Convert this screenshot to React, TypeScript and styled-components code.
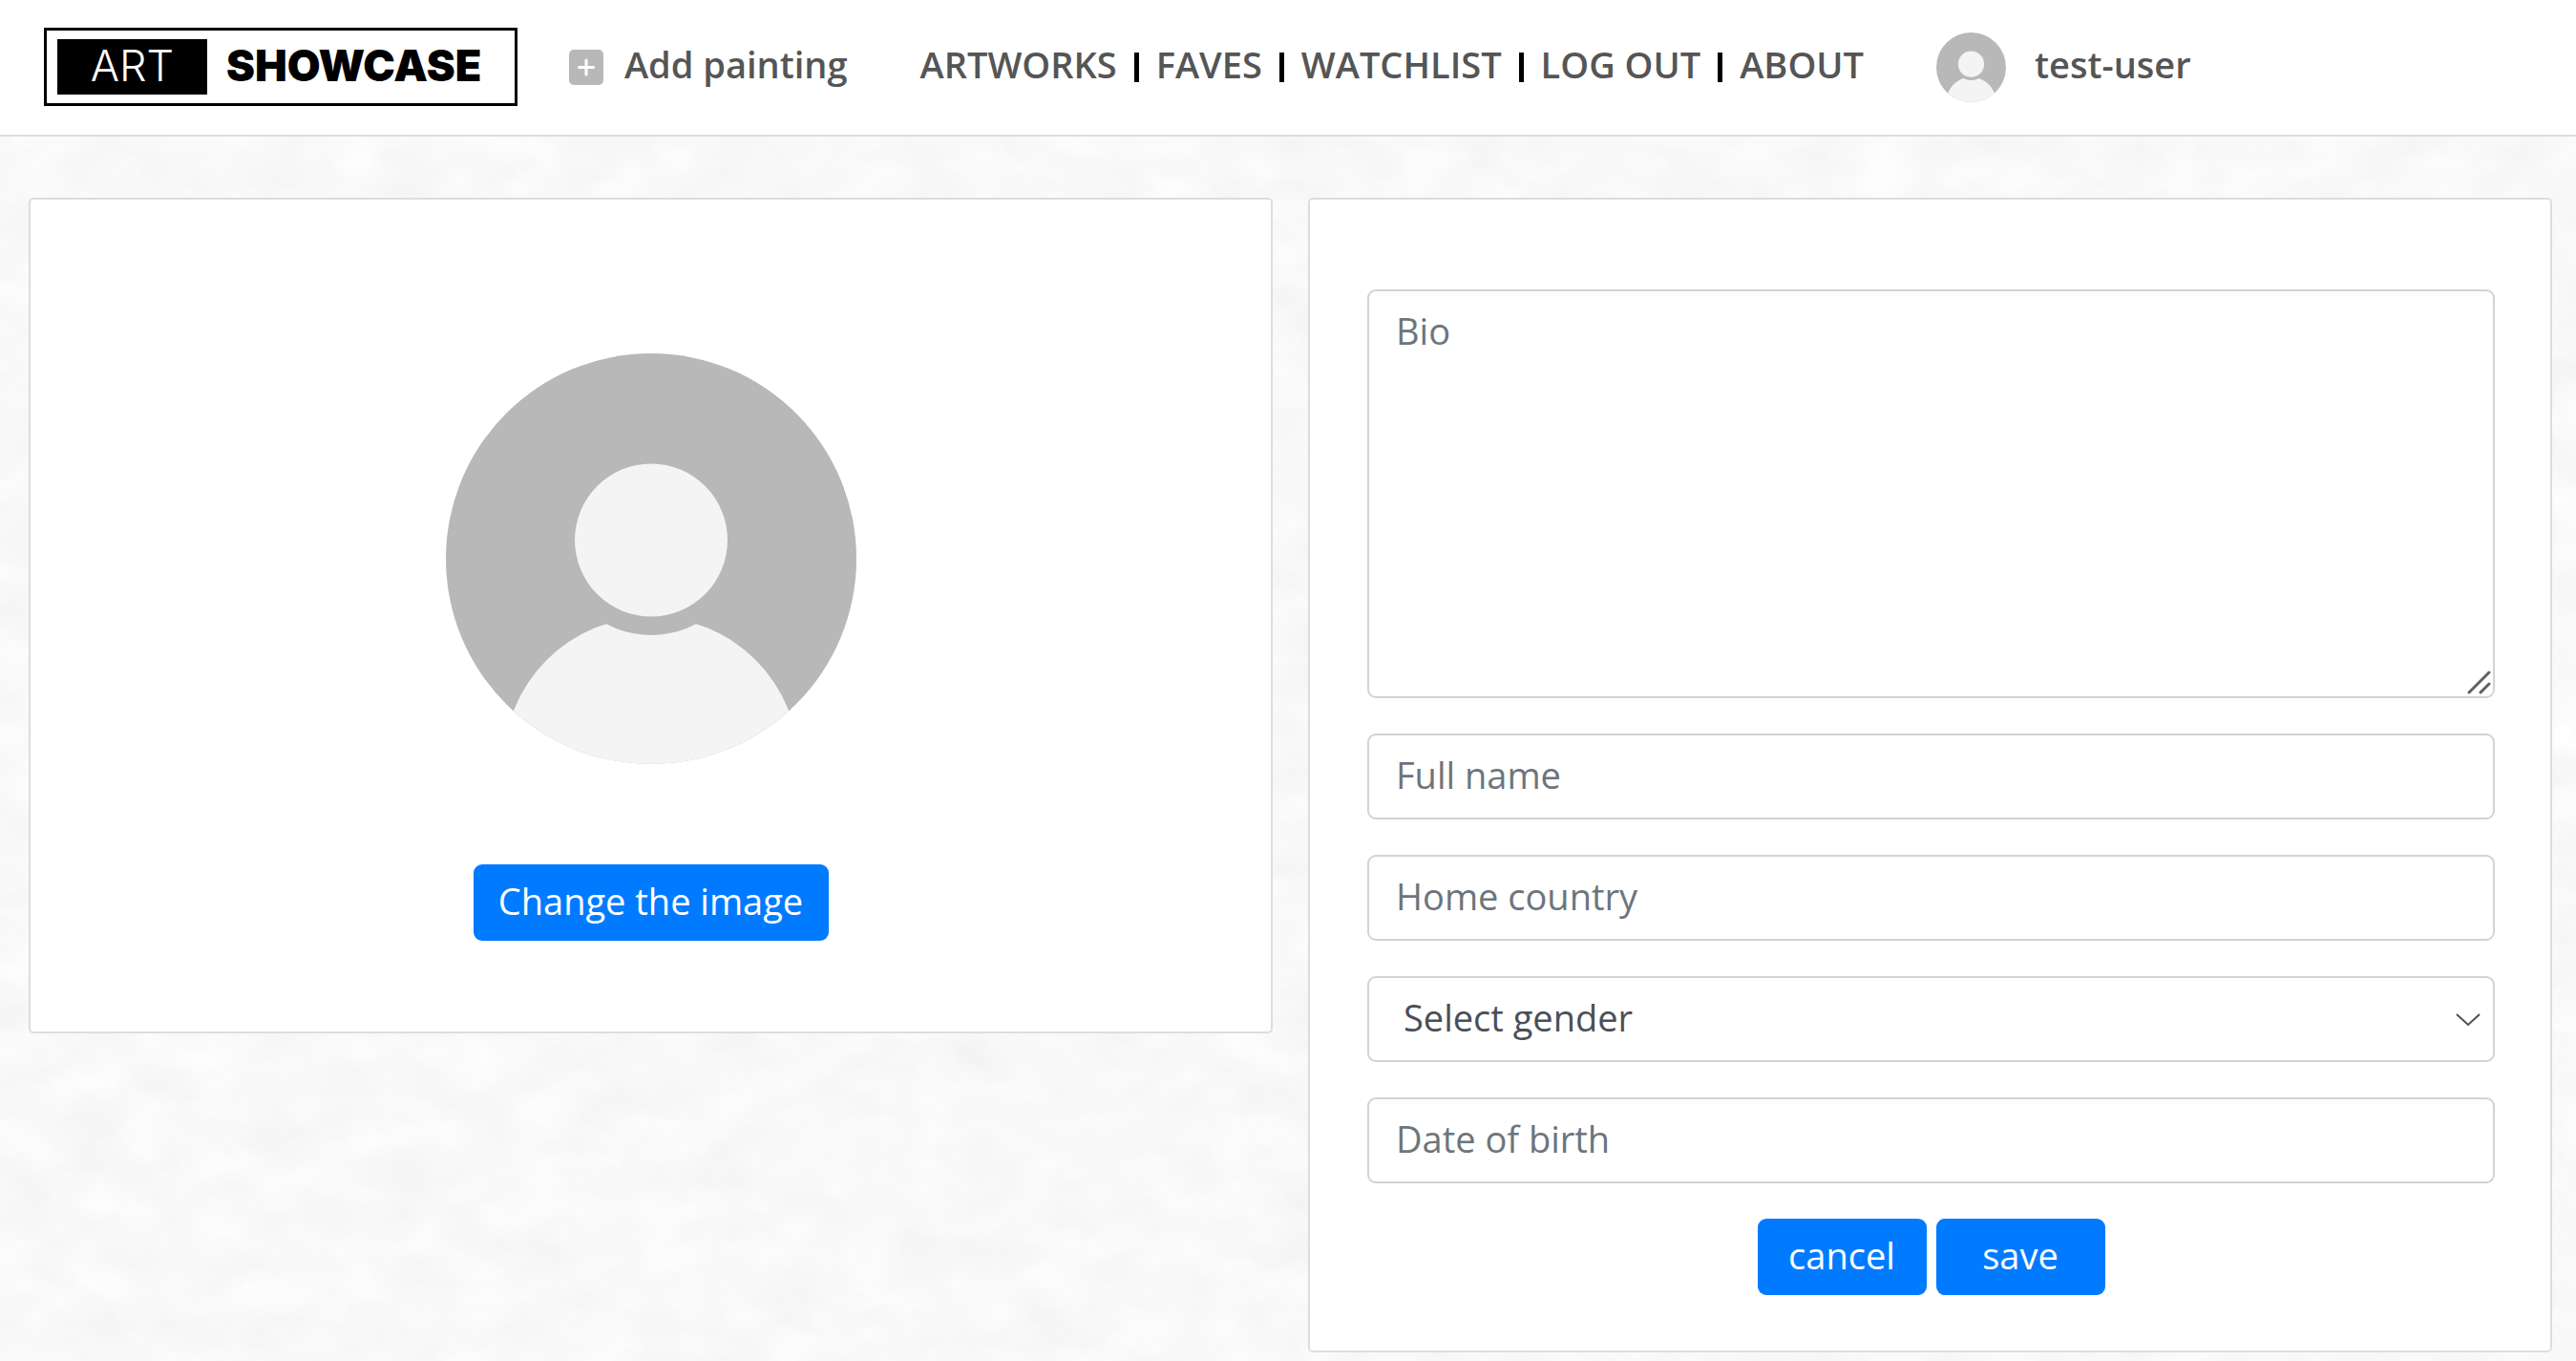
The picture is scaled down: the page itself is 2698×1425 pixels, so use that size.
import React, { useId } from "react";
import styled, { createGlobalStyle } from "styled-components";

const colors = {
  ink: "#555555",
  line: "#dbdde1",
  fieldLine: "#ced4da",
  placeholder: "#6c757d",
  fieldText: "#495057",
  primary: "#007bff",
  muted: "#b8b8b8",
  pale: "#f4f4f4",
};

const GlobalStyle = createGlobalStyle`
  *, *::before, *::after { box-sizing: border-box; }
  html { background: #f9f9f9; }
  body {
    margin: 0;
    font-family: "Open Sans", "Noto Sans", sans-serif;
    font-size: 38px;
    font-weight: 500;
    line-height: 56px;
    color: ${colors.ink};
  }
  button, input, select, textarea { font: inherit; }
`;

const Page = styled.div`
  position: relative;
  min-height: 100vh;
`;

const PaperTexture = styled.svg`
  position: absolute;
  inset: 0;
  width: 100%;
  height: 100%;
  z-index: -1;
`;

const Header = styled.header`
  display: flex;
  align-items: center;
  padding: 29px 46px 30px;
  background: #fff;
  border-bottom: 2px solid ${colors.line};
  font-weight: 600;
`;

const Logo = styled.a`
  display: flex;
  align-items: center;
  flex: none;
  width: 496px;
  height: 82px;
  padding: 0 11px;
  gap: 20px;
  border: 3px solid #000;
  color: #000;
  font-family: Inter, "Open Sans", sans-serif;
  font-size: 45px;
  text-decoration: none;
`;

const LogoArt = styled.span`
  display: flex;
  align-items: center;
  justify-content: center;
  width: 157px;
  height: 58px;
  padding-bottom: 2px;
  background: #000;
  color: #fff;
  font-weight: 300;
`;

const LogoShowcase = styled.span`
  padding-bottom: 2px;
  font-weight: 900;
`;

const HeaderLink = styled.a`
  display: inline-flex;
  align-items: center;
  color: ${colors.ink};
  text-decoration: none;
  white-space: nowrap;
`;

const AddLink = styled(HeaderLink)`
  gap: 22px;
  margin-left: 54px;
`;

const UserLink = styled(HeaderLink)`
  gap: 30px;
  margin-left: 76px;
`;

const LinkText = styled.span`
  padding-bottom: 6px;
`;

const Nav = styled.nav`
  margin-left: 76px;
`;

const NavList = styled.ul`
  display: flex;
  align-items: center;
  gap: 18px;
  margin: 0;
  padding: 0;
  list-style: none;
`;

const NavItem = styled.li`
  display: flex;
  align-items: center;
  gap: 18px;

  & + &::before {
    content: "";
    width: 5px;
    height: 31px;
    background: #000;
  }
`;

const AvatarSvg = styled.svg<{ $size: number }>`
  display: block;
  flex: none;
  width: ${(p) => p.$size}px;
  height: ${(p) => p.$size}px;
`;

const Main = styled.main`
  display: grid;
  grid-template-columns: 1fr 1fr;
  align-items: start;
  gap: 37px;
  padding: 64px 25px 9px 30px;
`;

const Card = styled.section`
  background: #fff;
  border: 2px solid ${colors.line};
  border-radius: 5px;
`;

const PhotoCard = styled(Card)`
  display: flex;
  flex-direction: column;
  align-items: center;
  gap: 105px;
  padding: 161px 58px 95px;
`;

const FormCard = styled(Card)`
  padding: 94px 58px 58px 60px;
`;

const Form = styled.form`
  display: flex;
  flex-direction: column;
  gap: 37px;
`;

const Button = styled.button<{ $width: number }>`
  width: ${(p) => p.$width}px;
  height: 80px;
  padding: 0 0 4px;
  border: 0;
  border-radius: 9px;
  background: ${colors.primary};
  color: #fff;
  cursor: pointer;
`;

const Field = styled.div`
  position: relative;
  display: flex;
`;

const controlStyle = `
  display: block;
  width: 100%;
  margin: 0;
  border: 2px solid ${colors.fieldLine};
  border-radius: 9px;
  background: #fff;
  color: ${colors.fieldText};
  outline: none;
  &::placeholder { color: ${colors.placeholder}; opacity: 1; }
  &:focus { border-color: #80bdff; }
`;

const TextInput = styled.input`
  ${controlStyle}
  height: 90px;
  padding: 0 28px 4px;
`;

const TextArea = styled.textarea`
  ${controlStyle}
  height: 428px;
  padding: 13px 28px;
  resize: none;
`;

const Select = styled.select`
  ${controlStyle}
  height: 90px;
  padding: 0 80px 4px 36px;
  appearance: none;
`;

const Chevron = styled.svg`
  position: absolute;
  right: 15px;
  top: 38px;
  width: 26px;
  height: 15px;
  pointer-events: none;
`;

const ResizeGrip = styled.svg`
  position: absolute;
  right: 3px;
  bottom: 3px;
  width: 26px;
  height: 26px;
  pointer-events: none;
`;

const Actions = styled.div`
  display: flex;
  justify-content: center;
  gap: 10px;
`;

function Avatar({ size }: { size: number }) {
  const id = useId();
  return (
    <AvatarSvg $size={size} viewBox="0 0 430 430" role="img" aria-label="User avatar">
      <clipPath id={id}>
        <circle cx="215" cy="215" r="215" />
      </clipPath>
      <g clipPath={`url(#${id})`}>
        <rect width="430" height="430" fill={colors.muted} />
        <circle cx="215" cy="430.5" r="154.7" fill={colors.pale} />
        <circle cx="215" cy="195.5" r="99.5" fill={colors.muted} />
        <circle cx="215" cy="195.5" r="80" fill={colors.pale} />
      </g>
    </AvatarSvg>
  );
}

function PlusIcon() {
  return (
    <svg width="36" height="37" viewBox="0 0 36 37" aria-hidden="true">
      <rect width="36" height="37" rx="5" fill={colors.muted} />
      <path d="M18 11v15M10.5 18.5h15" stroke="#fff" strokeWidth="3" strokeLinecap="round" />
    </svg>
  );
}

function Texture() {
  return (
    <PaperTexture aria-hidden="true">
      <filter id="paper" x="0" y="0" width="100%" height="100%" colorInterpolationFilters="sRGB">
        <feTurbulence type="fractalNoise" baseFrequency="0.015 0.024" numOctaves={4} seed={7} />
        <feColorMatrix
          values="0.045 0.02 0 0 0.943
                  0.045 0.02 0 0 0.943
                  0.045 0.02 0 0 0.943
                  0 0 0 0 1"
        />
      </filter>
      <rect width="100%" height="100%" filter="url(#paper)" />
    </PaperTexture>
  );
}

const navLinks = ["ARTWORKS", "FAVES", "WATCHLIST", "LOG OUT", "ABOUT"];

export default function App() {
  return (
    <>
      <GlobalStyle />
      <Page>
        <Texture />
        <Header>
          <Logo href="#home">
            <LogoArt>ART</LogoArt>
            <LogoShowcase>SHOWCASE</LogoShowcase>
          </Logo>
          <AddLink href="#add">
            <PlusIcon />
            <LinkText>Add painting</LinkText>
          </AddLink>
          <Nav>
            <NavList>
              {navLinks.map((label) => (
                <NavItem key={label}>
                  <HeaderLink href={`#${label.toLowerCase().replace(" ", "-")}`}>
                    <LinkText>{label}</LinkText>
                  </HeaderLink>
                </NavItem>
              ))}
            </NavList>
          </Nav>
          <UserLink href="#profile">
            <Avatar size={73} />
            <LinkText>test-user</LinkText>
          </UserLink>
        </Header>
        <Main>
          <PhotoCard>
            <Avatar size={430} />
            <Button type="button" $width={372}>
              Change the image
            </Button>
          </PhotoCard>
          <FormCard>
            <Form onSubmit={(e) => e.preventDefault()}>
              <Field>
                <TextArea name="bio" aria-label="Bio" placeholder="Bio" />
                <ResizeGrip
                  viewBox="0 0 26 26"
                  fill="none"
                  stroke="#606060"
                  strokeWidth="3"
                  strokeLinecap="round"
                  aria-hidden="true"
                >
                  <path d="M2 23 23 2M14 23 23 14" />
                </ResizeGrip>
              </Field>
              <Field>
                <TextInput name="fullName" aria-label="Full name" placeholder="Full name" />
              </Field>
              <Field>
                <TextInput name="country" aria-label="Home country" placeholder="Home country" />
              </Field>
              <Field>
                <Select name="gender" aria-label="Gender" defaultValue="">
                  <option value="">Select gender</option>
                  <option value="female">Female</option>
                  <option value="male">Male</option>
                  <option value="other">Other</option>
                </Select>
                <Chevron viewBox="0 0 26 15" fill="none" stroke={colors.fieldText} strokeWidth="2" aria-hidden="true">
                  <path d="M1 2 13 13 25 2" />
                </Chevron>
              </Field>
              <Field>
                <TextInput name="birth" aria-label="Date of birth" placeholder="Date of birth" />
              </Field>
              <Actions>
                <Button type="button" $width={177}>
                  cancel
                </Button>
                <Button type="submit" $width={177}>
                  save
                </Button>
              </Actions>
            </Form>
          </FormCard>
        </Main>
      </Page>
    </>
  );
}
